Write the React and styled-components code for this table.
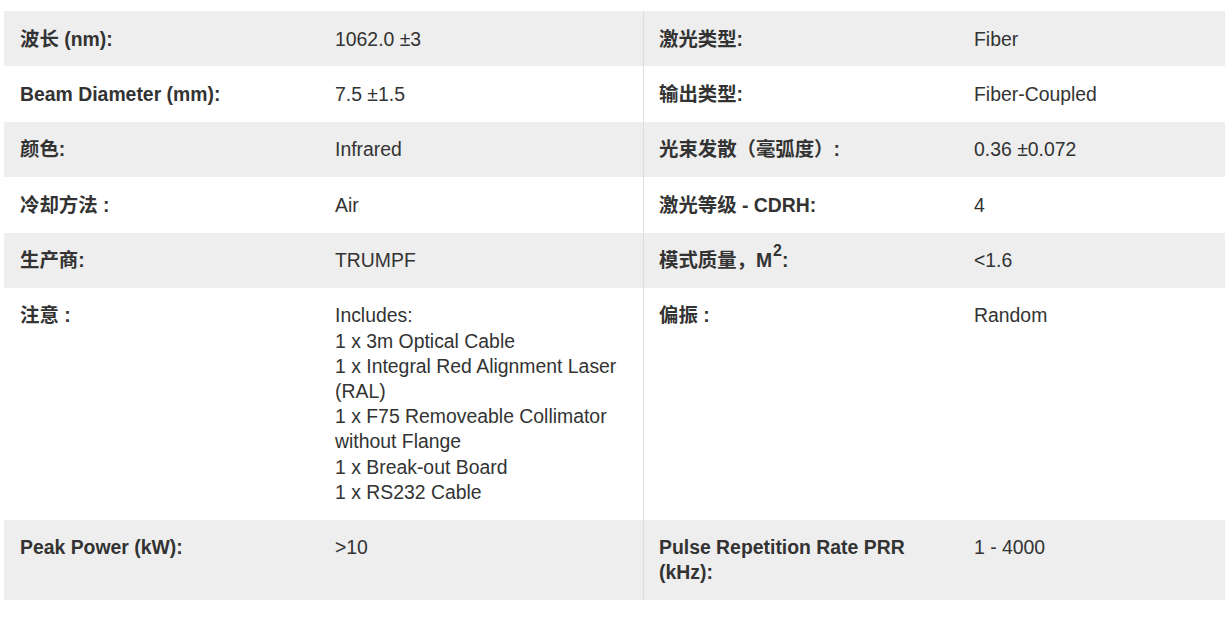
import { createGlobalStyle } from 'styled-components';
import styled from 'styled-components';

const GlobalStyle = createGlobalStyle`
  html, body {
    margin: 0;
    padding: 0;
    background: #ffffff;
    overflow: hidden;
  }
  body {
    font-family: "Liberation Sans", Arial, "Noto Sans CJK SC", sans-serif;
  }
`;

const specs = [
  [
    { label: '波长 (nm):', value: '1062.0 ±3' },
    { label: '激光类型:', value: 'Fiber' },
  ],
  [
    { label: 'Beam Diameter (mm):', value: '7.5 ±1.5' },
    { label: '输出类型:', value: 'Fiber-Coupled' },
  ],
  [
    { label: '颜色:', value: 'Infrared' },
    { label: '光束发散（毫弧度）:', value: '0.36 ±0.072' },
  ],
  [
    { label: '冷却方法 :', value: 'Air' },
    { label: '激光等级 - CDRH:', value: '4' },
  ],
  [
    { label: '生产商:', value: 'TRUMPF' },
    { label: <>模式质量，M<sup>2</sup>:</>, value: '<1.6' },
  ],
  [
    {
      label: '注意 :',
      value: [
        'Includes:',
        '1 x 3m Optical Cable',
        '1 x Integral Red Alignment Laser (RAL)',
        '1 x F75 Removeable Collimator without Flange',
        '1 x Break-out Board',
        '1 x RS232 Cable',
      ],
    },
    { label: '偏振 :', value: 'Random' },
  ],
  [
    { label: 'Peak Power (kW):', value: '>10' },
    { label: 'Pulse Repetition Rate PRR (kHz):', value: '1 - 4000' },
  ],
];

const Page = styled.div`
  padding: 11px 0 0 4px;
`;

const SpecTable = styled.div`
  display: flex;
  flex-direction: column;
`;

const Row = styled.div`
  display: grid;
  grid-template-columns: 315px 324px 315px 1fr;
  background: ${(p) => (p.$shaded ? '#eeeeee' : '#ffffff')};
`;

const Cell = styled.div`
  padding: 15.5px 16px 14.7px;
  font-size: 19.4px;
  line-height: 25.2px;
  color: #333333;
  font-weight: ${(p) => (p.$label ? 700 : 400)};
  border-left: ${(p) => (p.$divider ? '1px solid #dddddd' : 'none')};
  padding-left: ${(p) => (p.$divider ? '15px' : '16px')};

  sup {
    font-size: 0.82em;
    line-height: 0;
    position: relative;
    top: -0.2em;
    margin-left: 1px;
  }
`;

const Line = styled.div``;

const Value = ({ value }) =>
  Array.isArray(value) ? value.map((v, i) => <Line key={i}>{v}</Line>) : value;

const App = () => {
  return (
    <>
      <GlobalStyle />
      <Page>
        <SpecTable>
          {specs.map(([left, right], i) => (
            <Row key={i} $shaded={i % 2 === 0}>
              <Cell $label>{left.label}</Cell>
              <Cell>
                <Value value={left.value} />
              </Cell>
              <Cell $label $divider>
                {right.label}
              </Cell>
              <Cell>
                <Value value={right.value} />
              </Cell>
            </Row>
          ))}
        </SpecTable>
      </Page>
    </>
  );
};

export default App;
